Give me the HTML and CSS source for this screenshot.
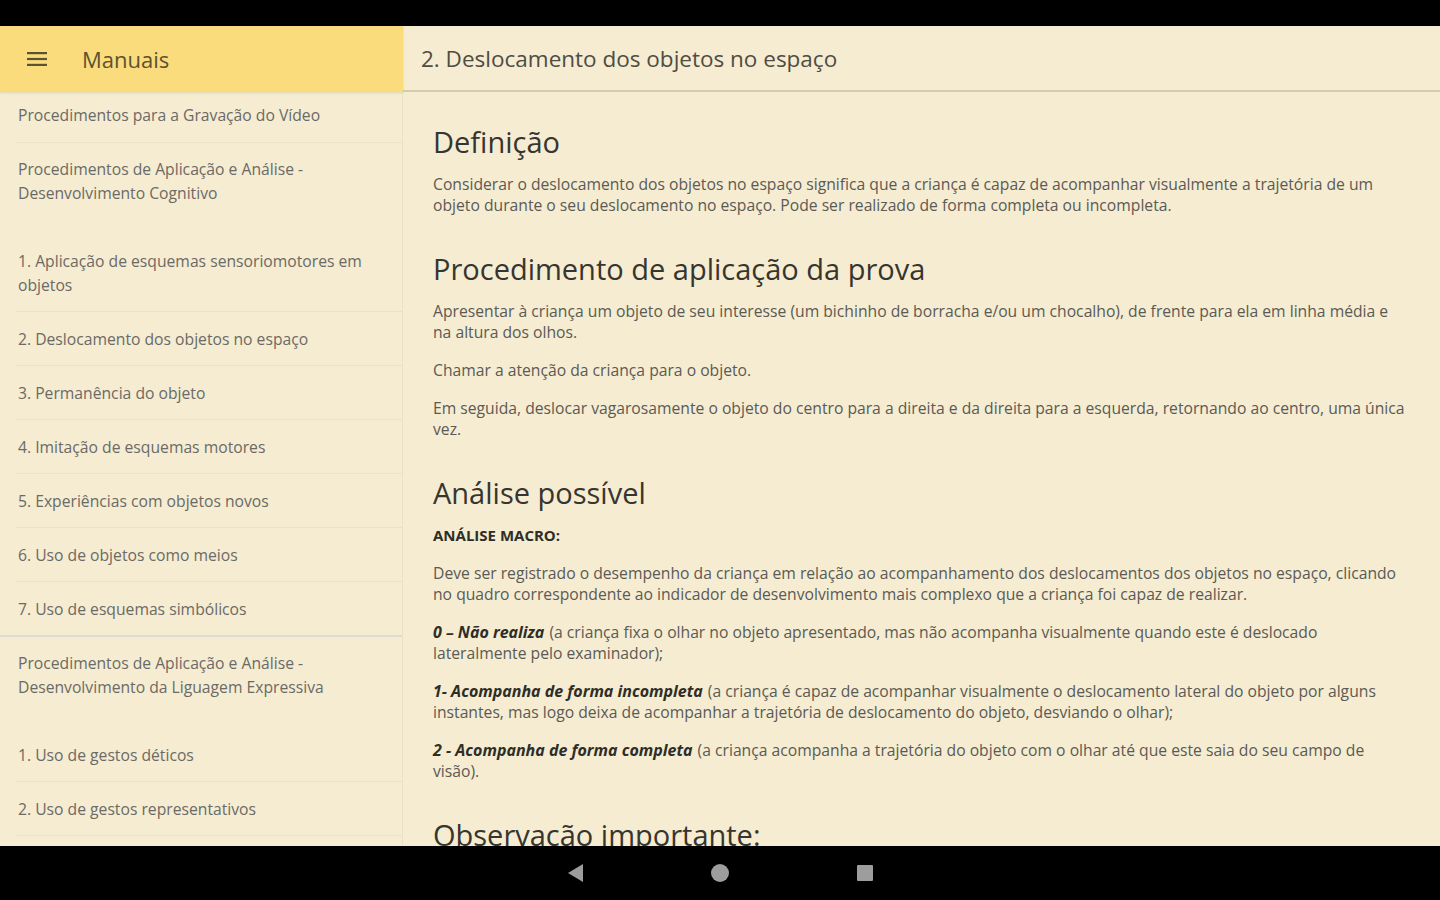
FILE: index.html
```html
<!DOCTYPE html>
<html lang="pt">
<head>
<meta charset="utf-8">
<title>Manuais</title>
<link rel="stylesheet" href="styles.css">
</head>
<body>
<div class="statusbar"></div>
<div class="app">
  <header class="appbar">
    <svg class="menu-icon" width="20" height="14" viewBox="0 0 20 14"><rect x="0" y="0" width="20" height="2.2" fill="#5b5232"/><rect x="0" y="5.9" width="20" height="2.2" fill="#5b5232"/><rect x="0" y="11.8" width="20" height="2.2" fill="#5b5232"/></svg>
    <span class="appbar-title">Manuais</span>
  </header>
  <header class="pagebar">
    <span class="page-title">2. Deslocamento dos objetos no espaço</span>
  </header>
  <nav class="sidebar">
    <div class="item top">Procedimentos para a Gravação do Vídeo</div>
    <div class="group">
      <div class="section">Procedimentos de Aplicação e Análise - Desenvolvimento Cognitivo</div>
      <div class="item">1. Aplicação de esquemas sensoriomotores em objetos</div>
      <div class="item">2. Deslocamento dos objetos no espaço</div>
      <div class="item">3. Permanência do objeto</div>
      <div class="item">4. Imitação de esquemas motores</div>
      <div class="item">5. Experiências com objetos novos</div>
      <div class="item">6. Uso de objetos como meios</div>
      <div class="item last">7. Uso de esquemas simbólicos</div>
    </div>
    <div class="group open">
      <div class="section">Procedimentos de Aplicação e Análise - Desenvolvimento da Liguagem Expressiva</div>
      <div class="item">1. Uso de gestos déticos</div>
      <div class="item">2. Uso de gestos representativos</div>
    </div>
  </nav>
  <main class="content">
    <h2>Definição</h2>
    <p>Considerar o deslocamento dos objetos no espaço significa que a criança é capaz de acompanhar visualmente a trajetória de um objeto durante o seu deslocamento no espaço. Pode ser realizado de forma completa ou incompleta.</p>
    <h2>Procedimento de aplicação da prova</h2>
    <p>Apresentar à criança um objeto de seu interesse (um bichinho de borracha e/ou um chocalho), de frente para ela em linha média e na altura dos olhos.</p>
    <p>Chamar a atenção da criança para o objeto.</p>
    <p>Em seguida, deslocar vagarosamente o objeto do centro para a direita e da direita para a esquerda, retornando ao centro, uma única vez.</p>
    <h2>Análise possível</h2>
    <p><b class="strong">ANÁLISE MACRO:</b></p>
    <p>Deve ser registrado o desempenho da criança em relação ao acompanhamento dos deslocamentos dos objetos no espaço, clicando no quadro correspondente ao indicador de desenvolvimento mais complexo que a criança foi capaz de realizar.</p>
    <p><b class="em">0 – Não realiza</b> (a criança fixa o olhar no objeto apresentado, mas não acompanha visualmente quando este é deslocado lateralmente pelo examinador);</p>
    <p><b class="em">1- Acompanha de forma incompleta</b> (a criança é capaz de acompanhar visualmente o deslocamento lateral do objeto por alguns instantes, mas logo deixa de acompanhar a trajetória de deslocamento do objeto, desviando o olhar);</p>
    <p><b class="em">2 - Acompanha de forma completa</b> (a criança acompanha a trajetória do objeto com o olhar até que este saia do seu campo de visão).</p>
    <h2>Observação importante:</h2>
  </main>
</div>
<div class="navbar">
  <svg class="nav-icon" width="18" height="20" viewBox="0 0 18 20"><polygon points="17,1 17,19 2,10" fill="#9d9d9d"/></svg>
  <svg class="nav-icon" width="20" height="20" viewBox="0 0 20 20"><circle cx="10" cy="10" r="9" fill="#9d9d9d"/></svg>
  <svg class="nav-icon" width="18" height="18" viewBox="0 0 18 18"><rect x="1" y="1" width="16" height="16" rx="1" fill="#9d9d9d"/></svg>
</div>
</body>
</html>
```
FILE: styles.css
```css
html, body {
  margin: 0;
  padding: 0;
  height: 900px;
  overflow: hidden;
}
body {
  display: flex;
  flex-direction: column;
  background: #000;
  font-family: "Open Sans", "Noto Sans", "DejaVu Sans", sans-serif;
}
.statusbar {
  height: 26px;
  flex: none;
  background: #000;
}
.app {
  flex: 1;
  min-height: 0;
  display: grid;
  grid-template-columns: 403px 1fr;
  grid-template-rows: 66px 1fr;
  background: #f5ecd1;
  overflow: hidden;
}
.appbar {
  background: #fbdc7c;
  display: flex;
  align-items: center;
  padding-left: 27px;
  box-shadow: 0 1px 2px rgba(120, 100, 40, 0.18);
  position: relative;
  z-index: 1;
}
.menu-icon {
  display: block;
}
.appbar-title {
  margin-left: 35px;
  font-size: 22px;
  color: #5b5232;
}
.pagebar {
  display: flex;
  align-items: center;
  padding-left: 18px;
  border-bottom: 2px solid #d3cbae;
  background: #f5ecd1;
}
.page-title {
  font-size: 22.5px;
  color: #4f4c44;
}
.sidebar {
  border-right: 1px solid #ebe2c4;
  overflow: hidden;
  color: #6b6a66;
  font-size: 15.7px;
  line-height: 24px;
}
.item {
  margin-left: 16px;
  padding: 15px 18px 14px 2px;
  border-bottom: 1px solid #ece3c7;
}
.item.top {
  padding-top: 11px;
  padding-bottom: 15px;
}
.item.last {
  border-bottom: none;
}
.group {
  border-bottom: 2px solid #dedbd2;
}
.group.open {
  border-bottom: none;
}
.section {
  padding: 14px 30px 29px 18px;
}
.content {
  padding: 31px 32px 0 30px;
  overflow: hidden;
  color: #5b5a55;
  font-size: 15.7px;
  line-height: 21px;
}
.content h2 {
  margin: 34px 0 13px;
  font-size: 29px;
  line-height: 38px;
  font-weight: 400;
  color: #36352f;
}
.content h2:first-child {
  margin-top: 0;
}
.content p {
  margin: 0 0 17px;
}
.strong {
  color: #2e2d28;
  font-weight: 700;
  font-size: 15px;
}
.em {
  color: #2e2d28;
  font-weight: 700;
  font-style: italic;
  font-size: 16px;
  padding-right: 1px;
}
.navbar {
  height: 54px;
  flex: none;
  background: #000;
  display: flex;
  align-items: center;
  justify-content: center;
  gap: 126px;
}
.nav-icon {
  display: block;
}
```
